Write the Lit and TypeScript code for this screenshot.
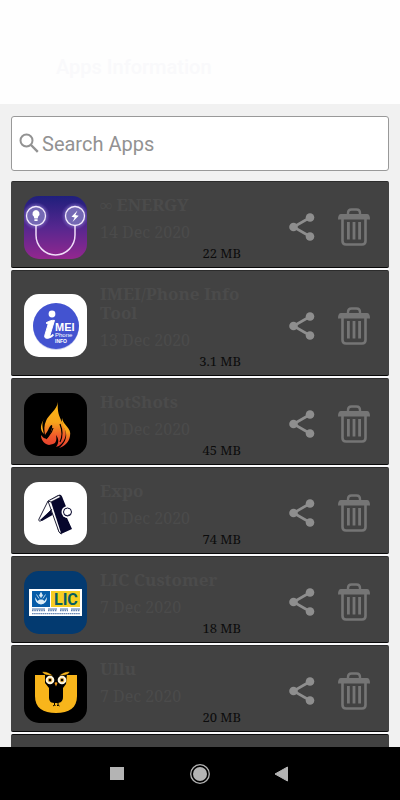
import { LitElement, html, css, svg, TemplateResult } from "lit";
import { customElement, property } from "lit/decorators.js";

interface AppEntry {
  name: string;
  date: string;
  size: string;
  logo: TemplateResult;
}

const energy = svg`
  <defs>
    <linearGradient id="sky" x1="0" y1="0" x2="0" y2="1">
      <stop offset="0" stop-color="#1f1f7c"/><stop offset=".5" stop-color="#56278f"/><stop offset="1" stop-color="#93278f"/>
    </linearGradient>
    <radialGradient id="halo"><stop offset=".5" stop-color="#a99be0"/><stop offset="1" stop-color="#6a55b8" stop-opacity="0"/></radialGradient>
  </defs>
  <rect width="63" height="63" fill="url(#sky)"/>
  <circle cx="12" cy="20" r="14" fill="url(#halo)"/><circle cx="51" cy="20" r="14" fill="url(#halo)"/>
  <path d="M12 30V39a19.5 20 0 0 0 39 0V30" fill="none" stroke="#f0dcf8" stroke-width="1.5"/>
  <circle cx="12" cy="20" r="9.5" fill="#7468b4" stroke="#f2eafc" stroke-width="1.3"/>
  <circle cx="51" cy="20" r="9.5" fill="#7468b4" stroke="#f2eafc" stroke-width="1.3"/>
  <path d="M12 14a3.6 3.6 0 0 1 2.2 6.4l-.5 2.2h-3.4l-.5-2.200A3.600 3.600 0 0 1 12 14zM10.400 23.200h3.200v1.800h-3.200z" fill="#fff"/>
  <path d="M53.500 14.500l-6 6.300 3.200.6-2.200 4.600 6.200-6.300-3.300-.6z" fill="#fff"/>`;

const imei = svg`
  <rect width="63" height="63" fill="#fff"/>
  <circle cx="32" cy="33" r="23" fill="#cdd1ee"/>
  <circle cx="32" cy="32" r="23" fill="#4353d0"/>
  <circle cx="28" cy="20" r="3.400" fill="#fff"/>
  <path d="M22 29c3-2 6-3 8.500-2.600L26 41c-.4 1.500.4 1.400 3-.6l.4 1c-3.300 3.300-9.400 4.400-8.700.3L24.200 30z" fill="#fff" stroke="#fff"/>
  <text x="31" y="37" font-size="11" font-weight="bold" fill="#fff">MEI</text>
  <text x="31" y="43" font-size="6" fill="#fff">Phone</text>
  <text x="31" y="49" font-size="5" font-weight="bold" fill="#fff">INFO</text>`;

const flame = svg`
  <defs><linearGradient id="fire" x1="0" y1="0" x2="0" y2="1">
    <stop offset="0" stop-color="#fdb813"/><stop offset=".45" stop-color="#f8a51b"/><stop offset=".75" stop-color="#ef5a2a"/><stop offset="1" stop-color="#e23b30"/>
  </linearGradient></defs>
  <rect width="63" height="63" fill="#000"/>
  <path fill="url(#fire)" d="M34 9C33 18 35 23 38 29C41 35 43 40 41 45C39 50 36 53 32 54C35 50 35 46 32 42C33 47 32 50 29 51L25 52C20 51 17 47 17 42C19 45 22 47 24 44C26 41 27 39 28 35C29 31 27 31 25 35C24 38 22 40 21 42C20 37 20 32 22 28C24 22 33 17 34 9Z"/>
  <path fill="url(#fire)" d="M20 26C17 31 19 36 20 41C15 36 17 31 20 26ZM38 25C39 32 48 35 46 43C45 49 41 53 35 55C40 51 43 46 42 40C41 35 37 31 38 25Z"/>
  <path d="M29 35C28 40 25 42 22 46M36 31C38 36 39 43 36 49" fill="none" stroke="#000" stroke-width="1.200"/>`;

const expo = svg`
  <rect width="63" height="63" fill="#fff"/>
  <path d="M26 18L35 13C37 12 38 14 39 17L43 27C39 29 38 34 43 36L48 47L37 52C36 52 35 50 34 48Z" fill="#06062c"/>
  <path d="M24 19L27 20L37 51L35 50Z" fill="#fff"/>
  <path d="M24 19L34 13.500Q36 12.500 37 14.500L27 20ZM24 19L15 37C14 39 16 40 18 38L28 27M24 19L35 50L37.500 52" fill="none" stroke="#222238" stroke-width="1"/>
  <path d="M25.500 18.800L35 13.800L36 15L27 19.600Z" fill="#fff"/>
  <path d="M16 38L27 28L28.500 33L18 39Z" fill="#06062c"/>
  <circle cx="43.500" cy="30" r="6" fill="#fff"/>
  <circle cx="43.500" cy="30" r="4" fill="#fff" stroke="#06062c" stroke-width="1"/>
  <path d="M40 32a4 4 0 0 0 7-1a5 5 0 0 1-7 1z" fill="#06062c"/>`;

const lic = svg`
  <rect width="63" height="63" fill="#033a70"/>
  <rect x="5" y="18" width="53" height="27" fill="#fff"/>
  <rect x="8" y="20" width="18" height="16" fill="#075ca8"/>
  <rect x="27" y="20" width="29" height="16" fill="#f6ce22"/>
  <path d="M11 26q0 7 6 7.500 6-.5 6-7.500l-2.500 4-2-1.500h-3l-2 1.500z" fill="#dcecf6"/>
  <path d="M17 21.500l1.500 3-1.500 2-1.500-2zM12.500 23.500l2.500 4M21.500 23.500l-2.500 4" fill="#dcecf6" stroke="#dcecf6" stroke-width=".8"/>
  <text x="30" y="34" font-size="16" font-weight="bold" font-family="Roboto, sans-serif" fill="#075d62">LIC</text>
  <path d="M8 38h13M24 38h9M36 38h8M47 38h9" stroke="#24508a" stroke-width=".8"/>
  <path d="M8 39.500h13M24 39.500h9M36 39.500h8M47 39.500h9" stroke="#5c7cab" stroke-width="1.400" stroke-dasharray="1.500 .8"/>
  <path d="M8 42.700h48" stroke="#6989b5" stroke-width="1.200" stroke-dasharray="1.600 .5"/>`;

const owl = svg`
  <rect width="63" height="63" fill="#000"/>
  <path d="M11 15H53V36C53 48 45 53 32 53C19 53 11 48 11 36Z" fill="#f8b51b"/>
  <path d="M21 14H43L42 24L39 28V37C39 42 36 43 32 43C27 43 25 42 25 37V28L21 23Z" fill="#000"/>
  <path d="M18 12C22 11 26 13 29 16C25 15 21 16 18 12ZM46 12C42 11 38 13 35 16C39 15 43 16 46 12Z" fill="#f8b51b" stroke="#000" stroke-width=".5"/>
  <circle cx="26" cy="20" r="4.300" fill="#fff8e0"/><circle cx="38" cy="20" r="4.300" fill="#fff8e0"/>
  <circle cx="26" cy="20" r="1.800" fill="#000" stroke="#d69a30"/><circle cx="38" cy="20" r="1.800" fill="#000" stroke="#d69a30"/>
  <path d="M30.500 23L32 22L33.500 23L32 26.500Z" fill="#f39a18"/>
  <path d="M30.500 42V45L29 46M30.500 45L31.500 46M34 42V45L33 46M34 45L35.500 46" fill="none" stroke="#000" stroke-width="1"/>`;

const apps: AppEntry[] = [
  { name: "∞ ENERGY", date: "14 Dec 2020", size: "22 MB", logo: energy },
  { name: "IMEI/Phone Info Tool", date: "13 Dec 2020", size: "3.1 MB", logo: imei },
  { name: "HotShots", date: "10 Dec 2020", size: "45 MB", logo: flame },
  { name: "Expo", date: "10 Dec 2020", size: "74 MB", logo: expo },
  { name: "LIC Customer", date: "7 Dec 2020", size: "18 MB", logo: lic },
  { name: "Ullu", date: "7 Dec 2020", size: "20 MB", logo: owl },
];

@customElement("app-card")
class AppCard extends LitElement {
  @property({ attribute: false }) entry!: AppEntry;

  static styles = css`
    :host { display: block; }
    .card {
      display: flex;
      align-items: center;
      box-sizing: border-box;
      padding: 10px 19px 5px 13px;
      background: #424242;
      border: 1px solid #2c2c2c;
      border-width: 1px 0;
      border-bottom-color: #080808;
      border-radius: 2px;
      font-family: "Noto Serif", "Liberation Serif", serif;
    }
    .logo { flex: none; width: 63px; height: 63px; border-radius: 15px; font-family: "Liberation Sans", sans-serif; }
    .info { flex: 1; min-width: 0; margin-left: 13px; }
    .name { margin: 0 0 7px; padding-top: 3px; font-size: 17px; line-height: 19px; font-weight: bold; color: #4b4b4b; }
    .date { margin: 0; font-size: 16px; line-height: 22px; color: #4b4b4b; }
    .size { margin: 2px 0 0; font-size: 13px; line-height: 17px; text-align: right; color: #0c0c0c; }
    .actions { flex: none; display: flex; align-items: center; gap: 21px; margin-left: 46px; }
    button { display: block; padding: 0; border: 0; background: none; cursor: pointer; }
    button svg { display: block; }
  `;

  render() {
    const { name, date, size, logo } = this.entry;
    return html`<article class="card">
      <svg class="logo" viewBox="0 0 63 63" aria-hidden="true">${logo}</svg>
      <div class="info">
        <h2 class="name">${name}</h2>
        <p class="date">${date}</p>
        <p class="size">${size}</p>
      </div>
      <div class="actions">
        <button aria-label="Share ${name}">
          <svg width="30" height="32" viewBox="0 0 30 32">
            <path d="M23 6.500L6.500 16L23 25.500" fill="none" stroke="#8e8e8e" stroke-width="2.600"/>
            <g fill="#8e8e8e"><circle cx="23" cy="6.500" r="4.300"/><circle cx="6.500" cy="16" r="4.300"/><circle cx="23" cy="25.500" r="4.300"/></g>
          </svg>
        </button>
        <button aria-label="Uninstall ${name}">
          <svg width="32" height="38" viewBox="0 0 32 38">
            <g fill="none" stroke="#757575">
              <path d="M10 7V5q0-3.500 3.500-3.500h5Q22 1.500 22 5V7" stroke-width="2.400"/>
              <path d="M4.500 11V33q0 3.500 3.500 3.500h16q3.500 0 3.500-3.500V11" stroke-width="2.600"/>
              <path d="M10.400 14V31.500M16 14V31.500M21.600 14V31.500" stroke-width="2.800"/>
            </g>
            <path d="M3 6H29q3 0 3 5.500H0Q0 6 3 6z" fill="#757575"/>
          </svg>
        </button>
      </div>
    </article>`;
  }
}

@customElement("app-root")
class AppRoot extends LitElement {
  static styles = css`
    :host {
      display: flex;
      flex-direction: column;
      height: 100vh;
      overflow: hidden;
      background: #f1f1f1;
      font-family: Roboto, sans-serif;
    }
    header { flex: none; padding: 55px 56px 25px; background: #fefefe; }
    h1 { margin: 0; font-size: 20px; line-height: 24px; font-weight: 500; color: #f9f9fb; }
    main { flex: 1; min-height: 0; overflow: hidden; padding: 12px 11px 0; }
    .search {
      display: flex;
      align-items: center;
      box-sizing: border-box;
      height: 55px;
      padding: 0 6px 0 7px;
      background: #fff;
      border: 1px solid #999;
      border-radius: 3px;
    }
    .search svg { flex: none; margin-bottom: 2px; }
    .search input {
      flex: 1;
      min-width: 0;
      padding: 0;
      margin-left: 3px;
      border: 0;
      outline: 0;
      background: none;
      font: 20px/24px Roboto, sans-serif;
      color: #424242;
    }
    .search input::placeholder { color: #929292; opacity: 1; }
    .list { display: flex; flex-direction: column; gap: 2px; margin: 10px 0 0; padding: 0; list-style: none; background: #f9f9fb; }
    .next { height: 60px; background: #424242; border-top: 1px solid #0c0c0c; border-radius: 2px; }
    nav { flex: none; display: flex; justify-content: center; align-items: center; gap: 60px; height: 53px; background: #000; }
    nav button { display: block; padding: 0; border: 0; background: none; cursor: pointer; }
    nav svg { display: block; }
  `;

  render() {
    return html`
      <header><h1>Apps Information</h1></header>
      <main>
        <label class="search">
          <svg width="20" height="20" viewBox="0 0 20 20" fill="none" stroke="#929292">
            <circle cx="7.500" cy="7.500" r="6" stroke-width="2"/>
            <path d="M12 12L18.800 18.800" stroke-width="2.400"/>
          </svg>
          <input type="text" placeholder="Search Apps" aria-label="Search Apps" />
        </label>
        <ul class="list">
          ${apps.map((entry) => html`<li><app-card .entry=${entry}></app-card></li>`)}
          <li class="next"></li>
        </ul>
      </main>
      <nav>
        <button aria-label="Recent apps"><svg width="22" height="22" viewBox="0 0 22 22"><rect x="3" y="4" width="14" height="13" fill="#b4b4b4"/></svg></button>
        <button aria-label="Home"><svg width="22" height="22" viewBox="0 0 22 22"><circle cx="11" cy="11" r="9.300" fill="none" stroke="#b4b4b4" stroke-width="1.300"/><circle cx="11" cy="11" r="7" fill="#b4b4b4"/></svg></button>
        <button aria-label="Back"><svg width="22" height="22" viewBox="0 0 22 22"><path d="M4 11L16.500 4V18z" fill="#b4b4b4" stroke="#b4b4b4" stroke-linejoin="round"/></svg></button>
      </nav>
    `;
  }
}
